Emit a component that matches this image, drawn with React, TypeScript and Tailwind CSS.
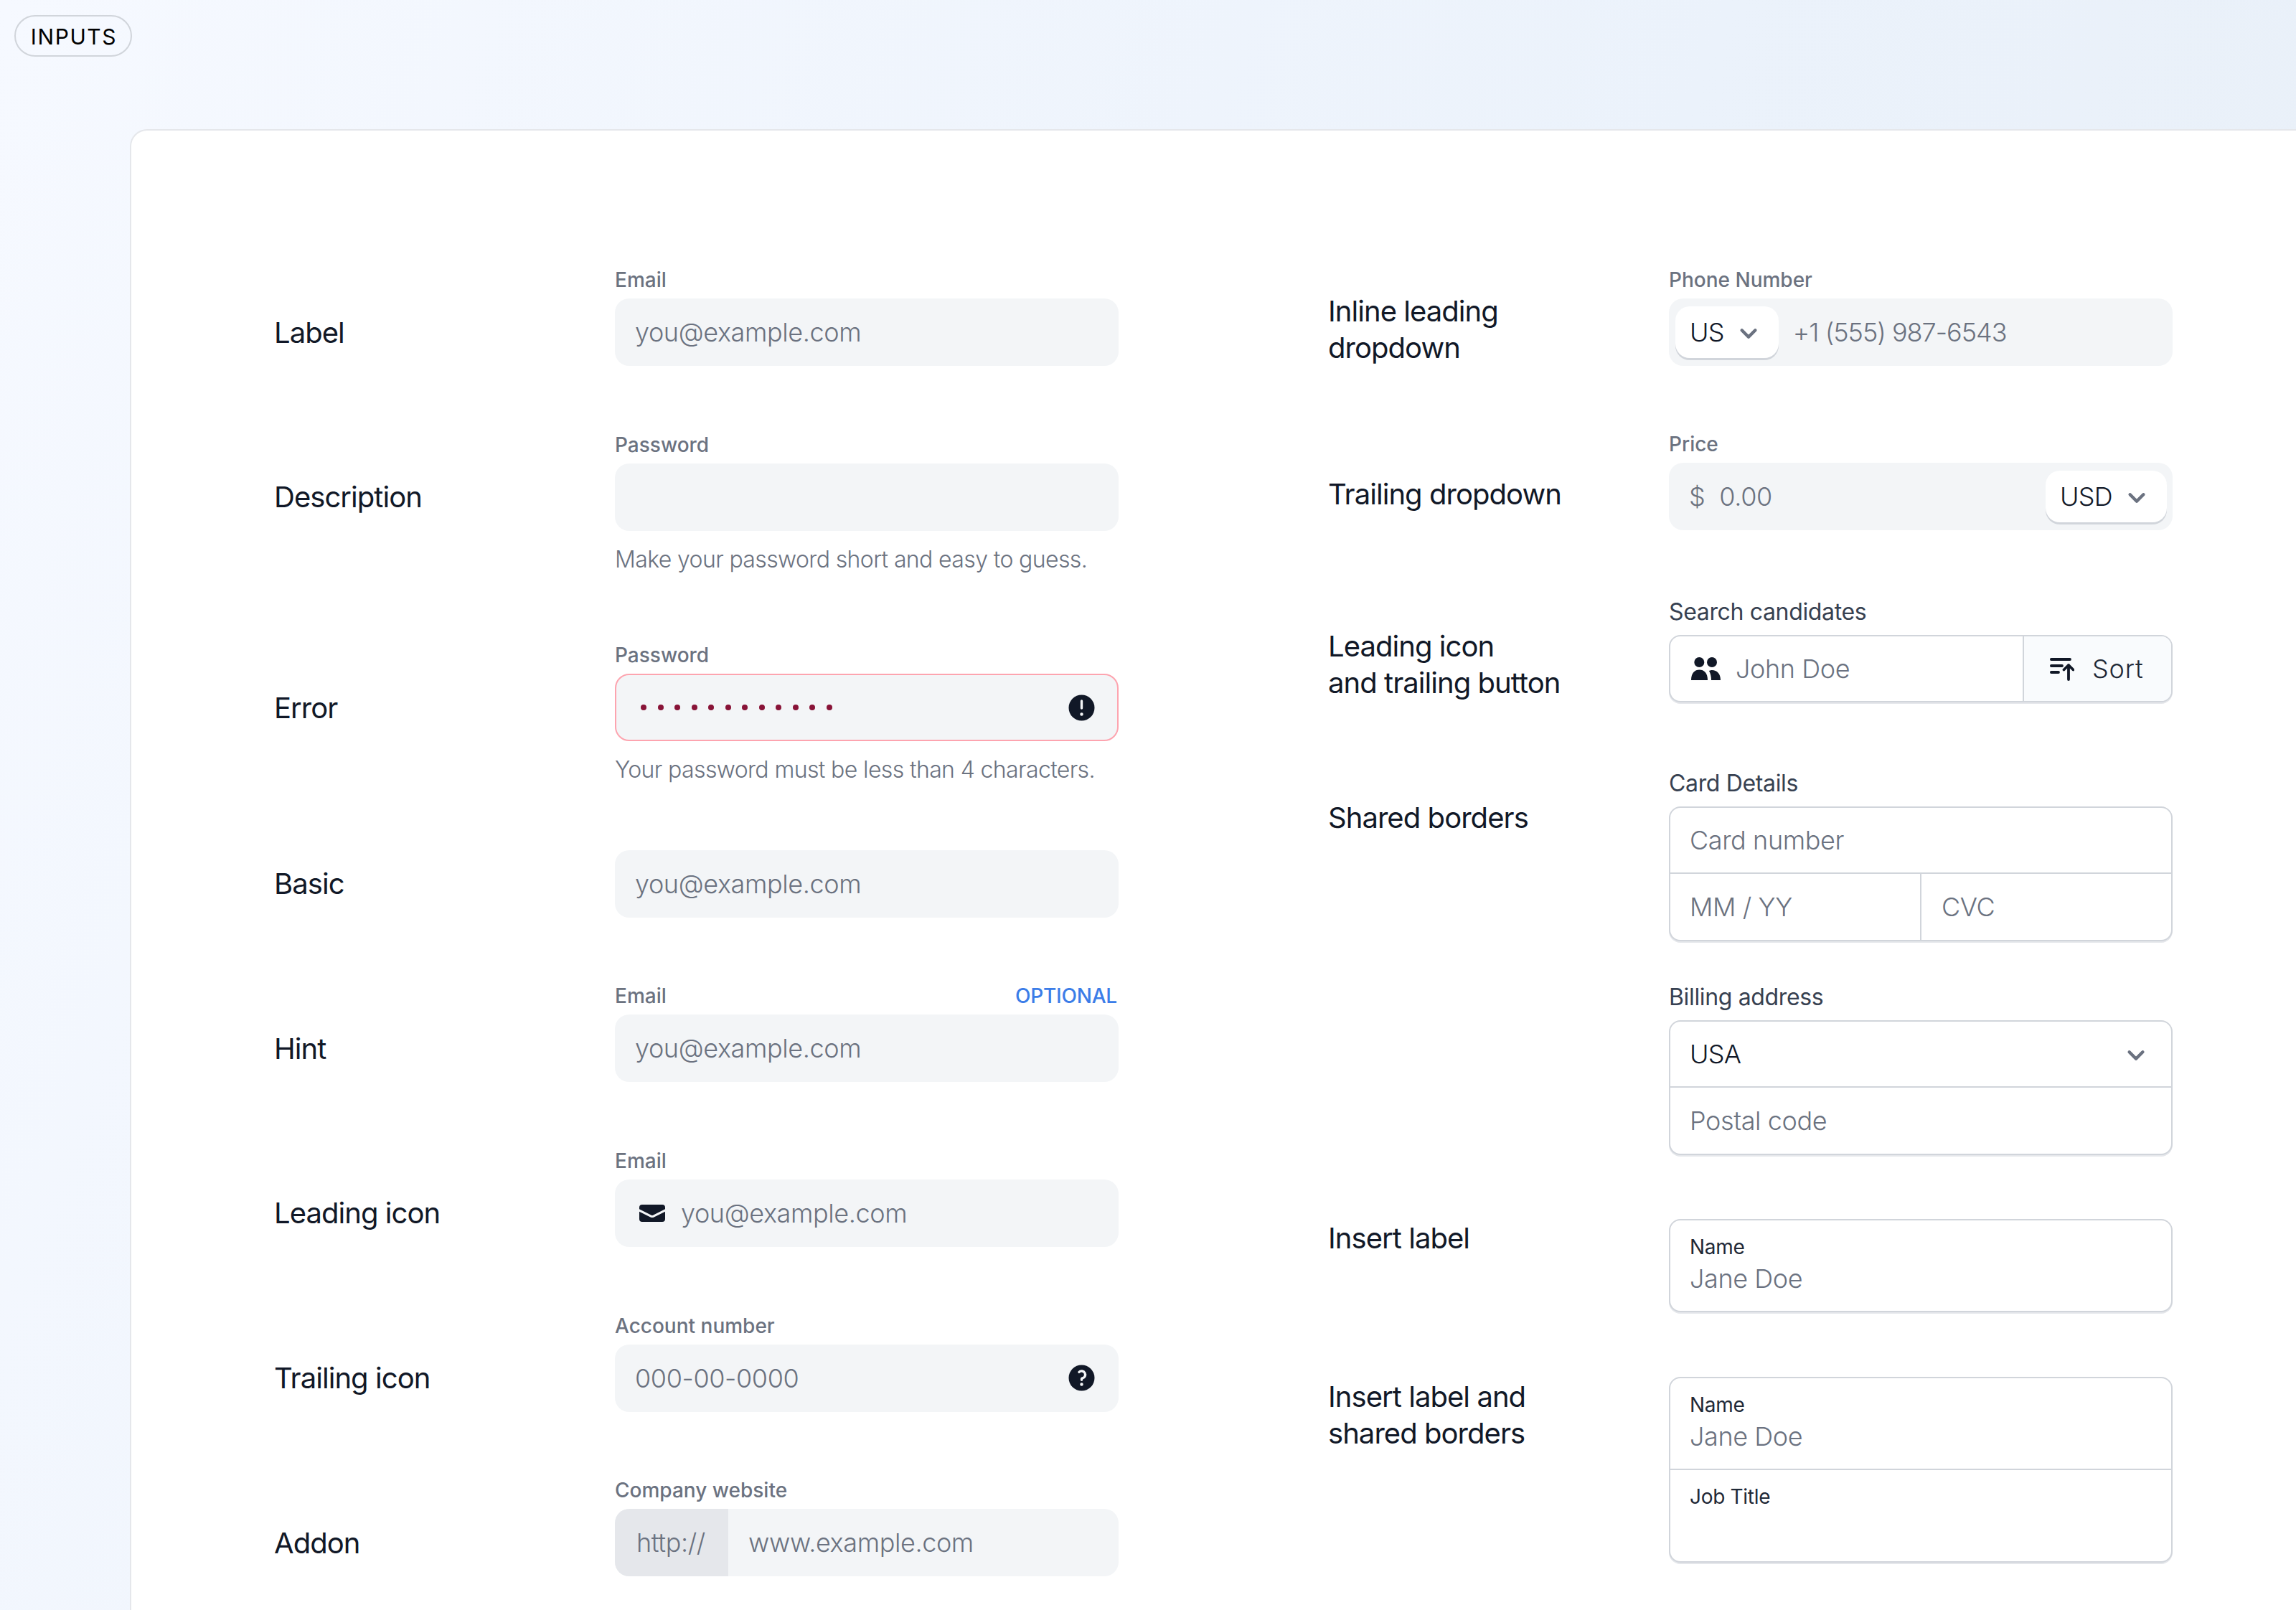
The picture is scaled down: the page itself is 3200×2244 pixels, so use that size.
import {
  HiMiniChevronDown,
  HiMiniEnvelope,
  HiMiniExclamationCircle,
  HiMiniQuestionMarkCircle,
} from "react-icons/hi2";
import type { ReactNode } from "react";

const font = { fontFamily: "Inter, sans-serif" };

function UsersIcon() {
  return (
    <svg viewBox="0 0 41 32" className="h-[32px] w-[41px] shrink-0 fill-[#111827]">
      <circle cx="11.3" cy="7" r="7" />
      <circle cx="29" cy="7" r="7" />
      <path d="M0 32C0 22 5 17.5 11.5 17.5C18 17.5 23 22 23 32Z" />
      <path d="M25 19C27 18 28 18 29 18C36 18 41 23 41 32H28C28 27 27 23 25 19Z" />
    </svg>
  );
}

function SortIcon() {
  return (
    <svg
      viewBox="0 0 34 33"
      fill="none"
      stroke="#111827"
      strokeWidth="3.8"
      strokeLinecap="round"
      strokeLinejoin="round"
      className="h-[33px] w-[34px] shrink-0"
    >
      <path d="M1.9 3H28M1.9 12H17M1.9 21H12" />
      <path d="M26 31V11M19.5 17.5L26 11L32.5 17.5" />
    </svg>
  );
}

function Chevron() {
  return <HiMiniChevronDown className="size-[44px] stroke-[0.5] text-[#6b7280]" />;
}

function Title({ children }: { children: ReactNode }) {
  return (
    <div className="w-[475px] shrink-0 text-[40px] leading-[51px] tracking-[-0.95px] text-[#111827]">
      {children}
    </div>
  );
}

function FieldLabel({ children, dark }: { children: ReactNode; dark?: boolean }) {
  return dark ? (
    <div className="h-[40px] text-[32px] leading-[40px] tracking-[-0.35px] text-[#374151]">
      {children}
    </div>
  ) : (
    <div className="mb-[8px] h-[40px] pt-[2px] text-[28px] font-medium leading-[40px] text-[#6b7280]">
      {children}
    </div>
  );
}

function Placeholder({ children }: { children: ReactNode }) {
  return <span className="text-[36px] font-light tracking-[-0.4px] text-[#6b7280]">{children}</span>;
}

function Row({
  title,
  label,
  hint,
  titleTop = "mt-[48px]",
  children,
}: {
  title: ReactNode;
  label?: ReactNode;
  hint?: string;
  titleTop?: string;
  children: ReactNode;
}) {
  return (
    <div className="flex items-start">
      <div className={label ? `${titleTop} flex h-[94px] items-center` : "flex h-[94px] items-center"}>
        <Title>{title}</Title>
      </div>
      <div className="w-[702px]">
        {label && <FieldLabel>{label}</FieldLabel>}
        {children}
        {hint && (
          <p className="mt-[16px] h-[48px] text-[32px] font-light leading-[48px] tracking-[-0.62px] text-[#6b7280]">
            {hint}
          </p>
        )}
      </div>
    </div>
  );
}

function Gray({ children, className = "" }: { children?: ReactNode; className?: string }) {
  return (
    <div className={`flex h-[94px] items-center rounded-[20px] bg-[#f3f5f7] px-[28px] ${className}`}>
      {children}
    </div>
  );
}

function Dropdown({ text }: { text: string }) {
  return (
    <div className="flex h-[72px] items-center gap-[12px] rounded-[20px] bg-white px-[20px] text-[36px] font-light tracking-[-0.7px] text-[#111827] shadow-[0_3px_0_#d1d5db]">
      {text}
      <Chevron />
    </div>
  );
}

function Outlined({ children, className = "" }: { children: ReactNode; className?: string }) {
  return (
    <div className={`overflow-hidden rounded-[16px] border-2 border-[#d1d5db] bg-white shadow-[0_2px_0_#e5e7eb] ${className}`}>
      {children}
    </div>
  );
}

function InsetField({ label, value, tall }: { label: string; value?: string; tall?: boolean }) {
  return (
    <div className={tall ? "h-[127px] px-[27px] pt-[17px]" : "h-[126px] px-[27px] pt-[17px]"}>
      <div className="h-[40px] text-[28px] leading-[40px] tracking-[-0.3px] text-[#1f2937]">{label}</div>
      {value && (
        <div className="h-[48px] leading-[48px]">
          <Placeholder>{value}</Placeholder>
        </div>
      )}
    </div>
  );
}

export default function App() {
  const dots = Array.from({ length: 12 }, (_, i) => i);

  return (
    <div
      className="flex h-[2244px] w-[3200px] flex-col overflow-hidden bg-[linear-gradient(110deg,#f6f9ff_0%,#ebf2fb_60%,#e8eff7_100%)] pl-[20px] pt-[21px]"
      style={font}
    >
      <div className="flex h-[58px] w-[164px] items-center justify-center rounded-full border-2 border-[#d1d5db] pl-[2px] pt-[2px] text-[30px] tracking-[1.6px] text-black">
        INPUTS
      </div>

      <div className="ml-[161px] mt-[101px] flex flex-1 gap-[292px] rounded-tl-[24px] border-l-2 border-t-2 border-[#e5e7eb] bg-white pl-[199px] pt-[186px]">
        {/* Left column */}
        <div className="flex flex-col gap-[87.6px]">
          <Row title="Label" label="Email">
            <Gray><Placeholder>you@example.com</Placeholder></Gray>
          </Row>
          <Row title="Description" label="Password" hint="Make your password short and easy to guess.">
            <Gray />
          </Row>
          <Row title="Error" label="Password" hint="Your password must be less than 4 characters.">
            <Gray className="justify-between border-2 border-[#fda4af] pr-[27px]">
              <div className="ml-[6px] flex gap-[15.5px]">
                {dots.map((i) => (
                  <span key={i} className="size-[8px] rounded-full bg-[#881337]" />
                ))}
              </div>
              <HiMiniExclamationCircle className="size-[45px] text-[#111827]" />
            </Gray>
          </Row>
          <Row title="Basic">
            <Gray><Placeholder>you@example.com</Placeholder></Gray>
          </Row>
          <Row
            title="Hint"
            label={
              <span className="flex justify-between pr-[2px]">
                Email
                <span className="tracking-[-0.2px] text-[#3b7de8]">OPTIONAL</span>
              </span>
            }
          >
            <Gray><Placeholder>you@example.com</Placeholder></Gray>
          </Row>
          <Row title="Leading icon" label="Email">
            <Gray className="gap-[20px] pl-[32px]">
              <HiMiniEnvelope className="size-[40px] text-[#111827]" />
              <Placeholder>you@example.com</Placeholder>
            </Gray>
          </Row>
          <Row title="Trailing icon" label="Account number">
            <Gray className="justify-between pr-[29px]">
              <Placeholder>000-00-0000</Placeholder>
              <HiMiniQuestionMarkCircle className="size-[45px] text-[#111827]" />
            </Gray>
          </Row>
          <Row title="Addon" label="Company website">
            <Gray className="overflow-hidden pl-0">
              <div className="flex h-full w-[158px] items-center bg-[#e5e7eb] pl-[30px]">
                <Placeholder>http://</Placeholder>
              </div>
              <div className="ml-[28px]"><Placeholder>www.example.com</Placeholder></div>
            </Gray>
          </Row>
        </div>

        {/* Right column */}
        <div className="flex flex-col">
          <Row title={<>Inline leading<br />dropdown</>} label="Phone Number" titleTop="mt-[44px]">
            <Gray className="gap-[20px] pl-[9px]">
              <Dropdown text="US" />
              <span className="text-[36px] font-light tracking-[-1px] text-[#6b7280]">+1 (555) 987-6543</span>
            </Gray>
          </Row>

          <div className="mt-[87px]">
            <Row title="Trailing dropdown" label="Price" titleTop="mt-[44px]">
              <Gray className="justify-between pr-[8px]">
                <div className="flex gap-[20px]">
                  <Placeholder>$</Placeholder>
                  <Placeholder>0.00</Placeholder>
                </div>
                <Dropdown text="USD" />
              </Gray>
            </Row>
          </div>

          <div className="mt-[94px] flex items-start">
            <div className="mt-[42px]">
              <Title>Leading icon<br />and trailing button</Title>
            </div>
            <div className="w-[702px]">
              <FieldLabel dark>Search candidates</FieldLabel>
              <Outlined className="mt-[12px] flex h-[94px]">
                <div className="flex flex-1 items-center gap-[21px] pl-[29px]">
                  <UsersIcon />
                  <Placeholder>John Doe</Placeholder>
                </div>
                <div className="flex w-[207px] items-center gap-[25px] border-l-2 border-[#d1d5db] bg-[#f9fbfd] pl-[36px] text-[36px] font-light tracking-[0.8px] text-[#1f2937]">
                  <SortIcon />
                  Sort
                </div>
              </Outlined>
            </div>
          </div>

          <div className="mt-[93px] flex items-start">
            <div className="mt-[42px]"><Title>Shared borders</Title></div>
            <div className="w-[702px]">
              <FieldLabel dark>Card Details</FieldLabel>
              <Outlined className="mt-[12px]">
                <div className="flex h-[92px] items-center border-b-2 border-[#d1d5db] px-[27px]">
                  <Placeholder>Card number</Placeholder>
                </div>
                <div className="flex h-[92px]">
                  <div className="flex w-[350px] shrink-0 items-center border-r-2 border-[#d1d5db] px-[27px]">
                    <Placeholder>MM / YY</Placeholder>
                  </div>
                  <div className="flex flex-1 items-center px-[28px]">
                    <Placeholder>CVC</Placeholder>
                  </div>
                </div>
              </Outlined>

              <div className="mt-[58px]">
                <FieldLabel dark>Billing address</FieldLabel>
              </div>
              <Outlined className="mt-[12px]">
                <div className="flex h-[92px] items-center justify-between border-b-2 border-[#d1d5db] px-[27px] text-[36px] font-light tracking-[-0.7px] text-[#111827]">
                  USA
                  <Chevron />
                </div>
                <div className="flex h-[92px] items-center px-[27px]">
                  <Placeholder>Postal code</Placeholder>
                </div>
              </Outlined>
            </div>
          </div>

          <div className="mt-[89px] flex items-start">
            <div className="mt-[1px]"><Title>Insert label</Title></div>
            <Outlined className="w-[702px]">
              <InsetField label="Name" value="Jane Doe" />
            </Outlined>
          </div>

          <div className="mt-[90px] flex items-start">
            <div className="mt-[2px]"><Title>Insert label and<br />shared borders</Title></div>
            <Outlined className="w-[702px]">
              <div className="border-b-2 border-[#d1d5db]">
                <InsetField label="Name" value="Jane Doe" />
              </div>
              <InsetField label="Job Title" tall />
            </Outlined>
          </div>
        </div>
      </div>
    </div>
  );
}
